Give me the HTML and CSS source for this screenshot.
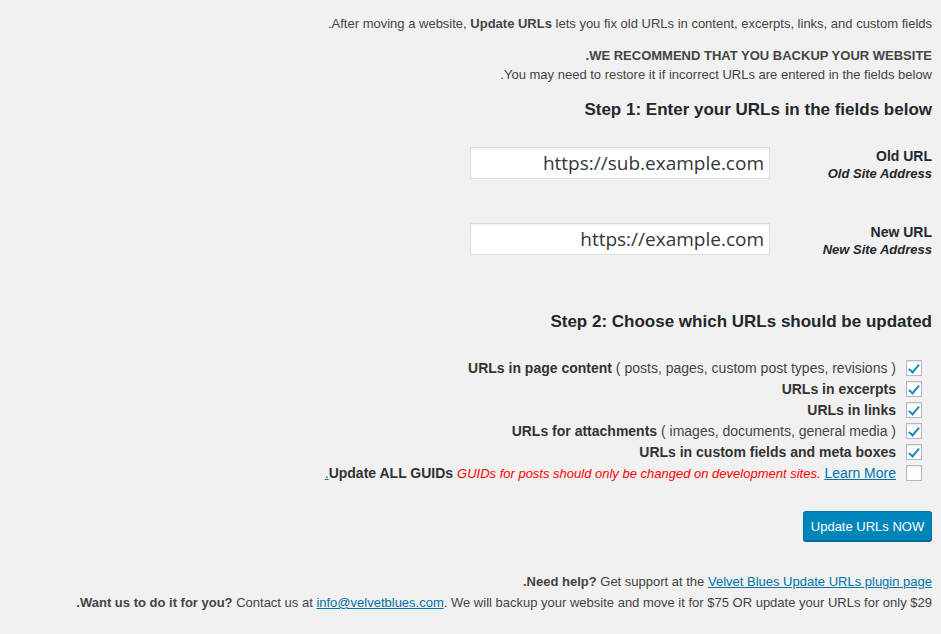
FILE: index.html
```html
<!DOCTYPE html>
<html lang="en">
<head>
<meta charset="utf-8">
<link rel="stylesheet" href="styles.css">
</head>
<body>
<div class="wrap">
  <p class="intro">.After moving a website, <strong>Update URLs</strong> lets you fix old URLs in content, excerpts, links, and custom fields</p>
  <div class="warning">
    <p class="warn-title">.WE RECOMMEND THAT YOU BACKUP YOUR WEBSITE</p>
    <p>.You may need to restore it if incorrect URLs are entered in the fields below</p>
  </div>

  <h3 class="step">Step 1: Enter your URLs in the fields below</h3>
  <div class="form-row first">
    <input class="url-input" type="text" value="https://sub.example.com">
    <div class="field-label"><strong>Old URL</strong><em>Old Site Address</em></div>
  </div>
  <div class="form-row second">
    <input class="url-input" type="text" value="https://example.com">
    <div class="field-label"><strong>New URL</strong><em>New Site Address</em></div>
  </div>

  <h3 class="step step2">Step 2: Choose which URLs should be updated</h3>
  <ul class="options">
    <li><label><strong>URLs in page content</strong> ( posts, pages, custom post types, revisions )</label><span class="cb checked"></span></li>
    <li><label><strong>URLs in excerpts</strong></label><span class="cb checked"></span></li>
    <li><label><strong>URLs in links</strong></label><span class="cb checked"></span></li>
    <li><label><strong>URLs for attachments</strong> ( images, documents, general media )</label><span class="cb checked"></span></li>
    <li><label><strong>URLs in custom fields and meta boxes</strong></label><span class="cb checked"></span></li>
    <li><label><a href="#">.</a><strong>Update ALL GUIDs</strong> <span class="red">GUIDs for posts should only be changed on development sites.</span> <a href="#">Learn More</a></label><span class="cb"></span></li>
  </ul>

  <button class="btn">Update URLs NOW</button>

  <div class="footer">
    <p><strong>.Need help?</strong> Get support at the <a href="#">Velvet Blues Update URLs plugin page</a></p>
    <p><strong>.Want us to do it for you?</strong> Contact us at <a href="#">info@velvetblues.com</a>. We will backup your website and move it for $75 OR update your URLs for only $29</p>
  </div>
</div>
</body>
</html>
```

FILE: styles.css
```css
html, body {
  margin: 0;
  padding: 0;
  background: #f1f1f1;
}
body {
  font-family: "Liberation Sans", Arial, sans-serif;
  font-size: 13px;
  color: #444;
}
.wrap {
  padding: 14px 9px 0 9px;
  display: flex;
  flex-direction: column;
  align-items: flex-end;
  text-align: right;
}
p { margin: 0; line-height: 19px; }
.warning { margin-top: 13px; }
.warn-title { font-weight: bold; }
.step {
  margin: 15px 0 0 0;
  font-size: 17px;
  line-height: 22px;
  color: #23282d;
  font-weight: bold;
}
.form-row {
  display: flex;
  align-items: flex-start;
  justify-content: flex-end;
}
.form-row.first { margin-top: 24px; }
.form-row.second { margin-top: 38px; }
.field-label {
  width: 162px;
  padding-top: 2px;
  display: flex;
  flex-direction: column;
  align-items: flex-end;
  color: #23282d;
  font-size: 13px;
  line-height: 18px;
}
.field-label strong { font-size: 14px; }
.field-label em { font-weight: bold; }
.url-input {
  margin-top: 2px;
  width: 300px;
  height: 32px;
  box-sizing: border-box;
  border: 1px solid #ddd;
  background: #fff;
  font-family: "Open Sans", sans-serif;
  font-size: 19px;
  color: #32373c;
  padding: 0 5px;
  text-align: right;
  box-shadow: inset 0 1px 2px rgba(0,0,0,0.07);
  outline: none;
}
.step2 { margin-top: 52px; }
.options {
  list-style: none;
  margin: 24px 0 0 0;
  padding: 0;
  align-self: stretch;
}
.options li {
  display: flex;
  align-items: center;
  justify-content: flex-end;
  height: 21px;
  padding-right: 10px;
  font-size: 14px;
}
.options label { margin-right: 10px; }
.options strong { color: #333; }
.cb {
  width: 16px;
  height: 16px;
  box-sizing: border-box;
  border: 1px solid #b4b9be;
  background: #fff;
  flex: none;
  position: relative;
  box-shadow: inset 0 1px 2px rgba(0,0,0,0.1);
}
.cb.checked::after {
  content: "";
  position: absolute;
  left: 4px;
  top: 1px;
  width: 4px;
  height: 9px;
  border: solid #1e8cbe;
  border-width: 0 2px 2px 0;
  transform: rotate(40deg);
}
.red { color: #f00; font-style: italic; font-size: 13px; }
a { color: #0073aa; }
.btn {
  margin-top: 28px;
  height: 30px;
  width: 129px;
  padding: 0;
  background: #0085ba;
  border: 1px solid #0073aa;
  border-bottom-color: #006799;
  border-radius: 3px;
  box-shadow: 0 1px 0 #006799;
  color: #fff;
  font-family: "Liberation Sans", Arial, sans-serif;
  font-size: 13px;
}
.footer { margin-top: 30px; }
.footer p { line-height: 21px; }
```
